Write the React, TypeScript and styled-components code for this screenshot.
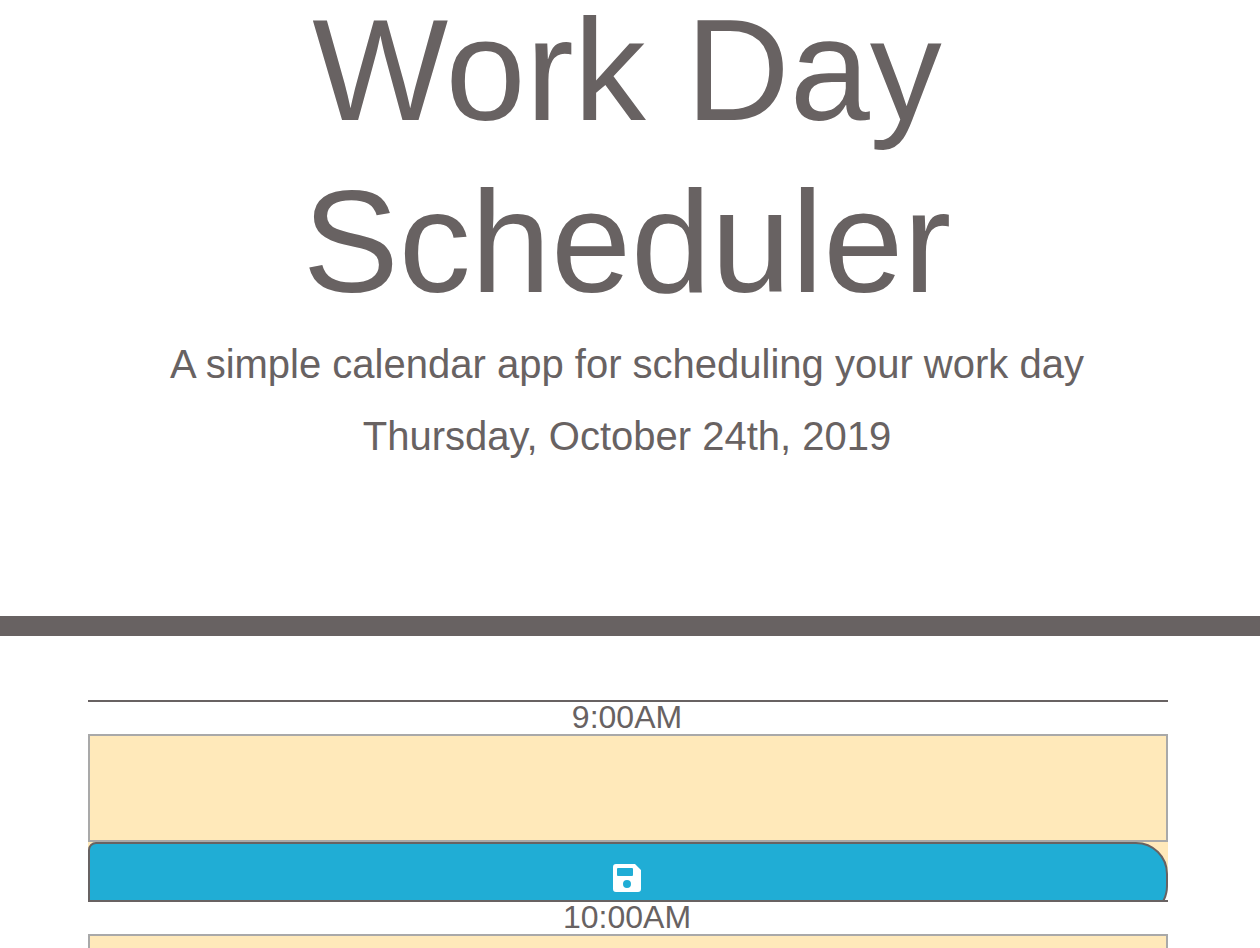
import React from "react";
import styled, { createGlobalStyle } from "styled-components";

const ink = "#686262";

const GlobalStyle = createGlobalStyle`
  * { box-sizing: border-box; }
  body {
    margin: 0;
    background: #ffffff;
    color: ${ink};
    font-family: "Liberation Sans", Arial, sans-serif;
    font-size: 32px;
    line-height: 1;
    overflow-x: hidden;
    scrollbar-width: none;
  }
`;

const Header = styled.header`
  padding: 0 94px 144px 88px;
  border-bottom: 20px solid ${ink};
  text-align: center;
`;

const Title = styled.h1`
  max-width: 800px;
  margin: -15px auto -1px;
  font-size: 144px;
  font-weight: 400;
  line-height: 172px;
`;

const Lead = styled.p`
  margin: 0;
  font-size: 40px;
  line-height: 72px;
`;

const Schedule = styled.main`
  padding: 64px 92px 0 88px;
`;

const TimeBlock = styled.section`
  display: flex;
  flex-direction: column;
  height: 200px;
  border-top: 2px solid ${ink};
  overflow: hidden;
`;

const Hour = styled.label`
  height: 32px;
  padding-right: 2px;
  line-height: 30px;
  text-align: center;
`;

const Entry = styled.textarea`
  display: block;
  width: 100%;
  height: 108px;
  flex: none;
  margin: 0;
  padding: 4px;
  border: 2px solid #a9a9a9;
  border-radius: 0;
  background: #ffe9ba;
  color: inherit;
  font: inherit;
  resize: none;
  outline: none;
`;

const SaveArea = styled.div`
  flex: none;
  height: 46px;
  background: #ffe9ba;
`;

const SaveButton = styled.button`
  display: flex;
  justify-content: center;
  width: 100%;
  height: 76px;
  padding: 16px 2px 0 0;
  border: 2px solid ${ink};
  border-radius: 8px 32px 32px 8px;
  background: #20add5;
  color: #ffffff;
`;

const SaveIcon = () => (
  <svg width="36" height="36" viewBox="0 0 36 36" fill="currentColor" aria-hidden="true">
    <path
      fillRule="evenodd"
      d="M7 4H26L32 10V29a3 3 0 0 1-3 3H7a3 3 0 0 1-3-3V7a3 3 0 0 1 3-3ZM9 8a1 1 0 0 0-1 1v6a1 1 0 0 0 1 1h14a1 1 0 0 0 1-1V9a1 1 0 0 0-1-1ZM18 20a4 4 0 1 0 0 8a4 4 0 1 0 0-8Z"
    />
  </svg>
);

const hours = ["9:00AM", "10:00AM"];

export default function App() {
  return (
    <>
      <GlobalStyle />
      <Header>
        <Title>Work Day Scheduler</Title>
        <Lead>A simple calendar app for scheduling your work day</Lead>
        <Lead>Thursday, October 24th, 2019</Lead>
      </Header>
      <Schedule>
        {hours.map((hour) => (
          <TimeBlock key={hour}>
            <Hour htmlFor={hour}>{hour}</Hour>
            <Entry id={hour} />
            <SaveArea>
              <SaveButton type="button" aria-label={`Save ${hour}`}>
                <SaveIcon />
              </SaveButton>
            </SaveArea>
          </TimeBlock>
        ))}
      </Schedule>
    </>
  );
}
